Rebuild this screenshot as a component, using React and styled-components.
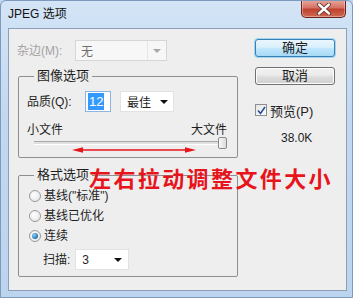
import React from 'react';
import styled, { createGlobalStyle } from 'styled-components';

const Global = createGlobalStyle`
    html, body { margin : 0; padding : 0; background : #bfd6ee; }
    body { font-family : "Liberation Sans", "Noto Sans CJK SC", sans-serif; font-size : 12px; color : #1e1e1e; }
`;

const Window = styled.div`
    width : 353px;
    height : 298px;
    box-sizing : border-box;
    border : 1px solid #7d99bb;
    border-radius : 6px 6px 0 0;
    background : linear-gradient(180deg, #d3e4f6 0%, #c2d8f0 40%, #bcd4ed 100%);
    padding : 0 5px 6px 7px;
    display : flex;
    flex-direction : column;
    overflow : hidden;
`;

const TitleBar = styled.div`
    height : 27px;
    display : flex;
    align-items : flex-start;
    justify-content : space-between;
`;

const Title = styled.span`
    margin-top : 6px;
    line-height : 14px;
    font-size : 12px;
    color : #111;
`;

const CloseBtn = styled.div`
    width : 45px;
    height : 18px;
    margin-top : -1px;
    margin-right : 1px;
    box-sizing : border-box;
    border : 1px solid #6b2219;
    border-top : none;
    border-radius : 0 0 5px 5px;
    background : linear-gradient(180deg, #e8a99e 0%, #d77264 45%, #c0412f 55%, #cf6a52 100%);
    display : flex;
    align-items : center;
    justify-content : center;
    box-shadow : inset 0 0 0 1px rgba(255,255,255,0.35);
`;

const Client = styled.div`
    position : relative;
    flex : 1;
    background : #eeeeee;
    border : 1px solid #8b9fb8;
    display : flex;
`;

const LeftCol = styled.div`
    width : 222px;
    padding : 11px 0 0 8px;
    display : flex;
    flex-direction : column;
`;

const RightCol = styled.div`
    width : 80px;
    margin-left : 16px;
    padding-top : 10px;
    display : flex;
    flex-direction : column;
`;

const Row = styled.div`
    display : flex;
    align-items : center;
    height : ${p => p.h || 20}px;
    margin-top : ${p => p.mt || 0}px;
    margin-left : ${p => p.ml || 0}px;
`;

const Label = styled.span`
    width : ${p => p.w ? p.w + 'px' : 'auto'};
    color : ${p => p.disabled ? '#a3a3a3' : '#1e1e1e'};
    line-height : 14px;
    white-space : nowrap;
`;

const Select = styled.div`
    width : ${p => p.w}px;
    height : 21px;
    box-sizing : border-box;
    background : ${p => p.disabled ? '#f7f7f7' : '#ffffff'};
    border : 1px solid ${p => p.disabled ? '#d6d6d6' : '#e2e2e2'};
    display : flex;
    align-items : center;
    margin-left : ${p => p.ml || 0}px;
    color : ${p => p.disabled ? '#6f6f6f' : '#1e1e1e'};
`;

const SelectText = styled.span`
    flex : 1;
    padding-left : ${p => p.pl || 5}px;
`;

const SelectArrow = styled.span`
    width : ${p => p.w || 18}px;
    height : 100%;
    display : flex;
    align-items : center;
    justify-content : center;
    border-left : ${p => p.divider ? '1px solid #e6e6e6' : 'none'};
    &::after {
        content : '';
        border-left : 4px solid transparent;
        border-right : 4px solid transparent;
        border-top : 4px solid ${p => p.disabled ? '#a8a8a8' : '#111'};
    }
`;

const Group = styled.fieldset`
    margin : ${p => p.mt}px 0 0 1px;
    width : 220px;
    box-sizing : border-box;
    border : 1px solid #8f8f8f;
    border-radius : 2px;
    padding : ${p => p.pt}px 10px ${p => p.pb}px 8px;
    min-width : 0;
`;

const Legend = styled.legend`
    margin-left : 7px;
    padding : 0 3px;
    line-height : 14px;
    font-size : 13px;
`;

const QualityInput = styled.div`
    width : 26px;
    height : 21px;
    box-sizing : border-box;
    margin-left : 5px;
    border : 1px solid #8fb4df;
    background : #fff;
    display : flex;
    align-items : center;
    padding-left : 2px;
`;

const Selected = styled.span`
    background : #3399ff;
    color : #fff;
    padding : 1px 1px;
    line-height : 15px;
    font-size : 13px;
`;

const SizeLabels = styled.div`
    display : flex;
    justify-content : space-between;
    margin-top : 11px;
    line-height : 14px;
`;

const Slider = styled.div`
    position : relative;
    height : 12px;
    margin-left : 7px;
    display : flex;
    align-items : center;
`;

const Track = styled.div`
    flex : 1;
    height : 2px;
    border-top : 1px solid #a9a9a9;
    border-bottom : 1px solid #ffffff;
    background : #e0e0e0;
`;

const Thumb = styled.div`
    width : 9px;
    height : 12px;
    box-sizing : border-box;
    margin-left : -5px;
    border : 1px solid #8a8a8a;
    border-radius : 2px;
    background : linear-gradient(90deg, #f8f8f8, #dcdcdc);
    position : relative;
`;

const Radio = styled.span`
    width : 12px;
    height : 12px;
    box-sizing : border-box;
    border-radius : 50%;
    border : 1px solid #9a9a9a;
    background : radial-gradient(circle at 40% 40%, #ffffff, #e0e0e0);
    margin : 0 3px 0 2px;
    display : flex;
    align-items : center;
    justify-content : center;
    &::after {
        content : '';
        display : ${p => p.checked ? 'block' : 'none'};
        width : 6px;
        height : 6px;
        border-radius : 50%;
        background : radial-gradient(circle at 35% 35%, #8fd3f5, #1f6fa8 70%);
    }
`;

const Button = styled.div`
    height : 18px;
    margin-top : ${p => p.mt || 0}px;
    box-sizing : border-box;
    border-radius : 3px;
    border : 1px solid ${p => p.primary ? '#3c7fb1' : '#707070'};
    background : ${p => p.primary
        ? 'linear-gradient(180deg, #eaf6fd 0%, #d9f0fc 45%, #bee6fd 55%, #a7d9f5 100%)'
        : 'linear-gradient(180deg, #f2f2f2 0%, #ebebeb 45%, #dddddd 55%, #cfcfcf 100%)'};
    box-shadow : ${p => p.primary ? '0 0 0 1px #9bd6f5' : 'inset 0 0 0 1px #fcfcfc'};
    display : flex;
    align-items : center;
    justify-content : center;
    line-height : 14px;
    font-size : 13px;
`;

const CheckRow = styled.div`
    display : flex;
    align-items : center;
    margin-top : 18px;
    height : 14px;
    font-size : 13px;
`;

const CheckBox = styled.span`
    width : 12px;
    height : 12px;
    box-sizing : border-box;
    border : 1px solid #8f8f8f;
    background : linear-gradient(135deg, #e4e4e4, #ffffff);
    margin-right : 3px;
    display : flex;
    align-items : center;
    justify-content : center;
`;

const FileSize = styled.div`
    margin : 14px 0 0 26px;
    line-height : 14px;
`;

const Annotation = styled.div`
    position : absolute;
    left : 80px;
    top : 137px;
    font-size : 22px;
    line-height : 22px;
    font-weight : bold;
    letter-spacing : 2.4px;
    color : #e8141b;
    font-family : "Noto Sans CJK SC", sans-serif;
    white-space : nowrap;
`;

const Arrow = styled.svg`
    position : absolute;
    left : 63px;
    top : 117px;
`;

const JpegOptions = () => (
    <Window>
        <TitleBar>
            <Title>JPEG 选项</Title>
            <CloseBtn>
                <svg width="14" height="12" viewBox="0 0 14 12">
                    <path d="M2 1.5 L12 10.5 M12 1.5 L2 10.5" stroke="#5a2a25" strokeWidth="4" strokeLinecap="round" />
                    <path d="M2 1.5 L12 10.5 M12 1.5 L2 10.5" stroke="#ffffff" strokeWidth="2.4" strokeLinecap="round" />
                </svg>
            </CloseBtn>
        </TitleBar>
        <Client>
            <LeftCol>
                <Row h={21}>
                    <Label w={58} disabled>杂边(M):</Label>
                    <Select w={92} disabled>
                        <SelectText>无</SelectText>
                        <SelectArrow divider disabled />
                    </Select>
                </Row>
                <Group mt={8} pt={8} pb={8}>
                    <Legend>图像选项</Legend>
                    <Row h={21}>
                        <Label w={53}>品质(Q):</Label>
                        <QualityInput><Selected>12</Selected></QualityInput>
                        <Select w={54} ml={9}>
                            <SelectText pl={6}>最佳</SelectText>
                            <SelectArrow />
                        </Select>
                    </Row>
                    <SizeLabels>
                        <span>小文件</span>
                        <span>大文件</span>
                    </SizeLabels>
                    <Slider>
                        <Track />
                        <Thumb />
                    </Slider>
                </Group>
                <Group mt={10} pt={4} pb={6}>
                    <Legend>格式选项</Legend>
                    <Row>
                        <Radio />
                        <Label>基线("标准")</Label>
                    </Row>
                    <Row>
                        <Radio />
                        <Label>基线已优化</Label>
                    </Row>
                    <Row>
                        <Radio checked />
                        <Label>连续</Label>
                    </Row>
                    <Row h={21} mt={3} ml={16}>
                        <Label>扫描:</Label>
                        <Select w={54} ml={5}>
                            <SelectText pl={6}>3</SelectText>
                            <SelectArrow w={20} />
                        </Select>
                    </Row>
                </Group>
            </LeftCol>
            <RightCol>
                <Button primary>确定</Button>
                <Button mt={10}>取消</Button>
                <CheckRow>
                    <CheckBox>
                        <svg width="9" height="9" viewBox="0 0 9 9">
                            <path d="M1 4.5 L3.5 7.5 L8 1" fill="none" stroke="#2a4f9c" strokeWidth="1.6" />
                        </svg>
                    </CheckBox>
                    预览(P)
                </CheckRow>
                <FileSize>38.0K</FileSize>
            </RightCol>
            <Arrow width="124" height="8" viewBox="0 0 124 8">
                <line x1="6" y1="4" x2="118" y2="4" stroke="#e8141b" strokeWidth="1.4" />
                <polygon points="0,4 11,1.2 11,6.8" fill="#e8141b" />
                <polygon points="124,4 113,1.2 113,6.8" fill="#e8141b" />
            </Arrow>
            <Annotation>左右拉动调整文件大小</Annotation>
        </Client>
    </Window>
);

export default function App() {
    return <>
        <Global />
        <JpegOptions />
    </>;
}
